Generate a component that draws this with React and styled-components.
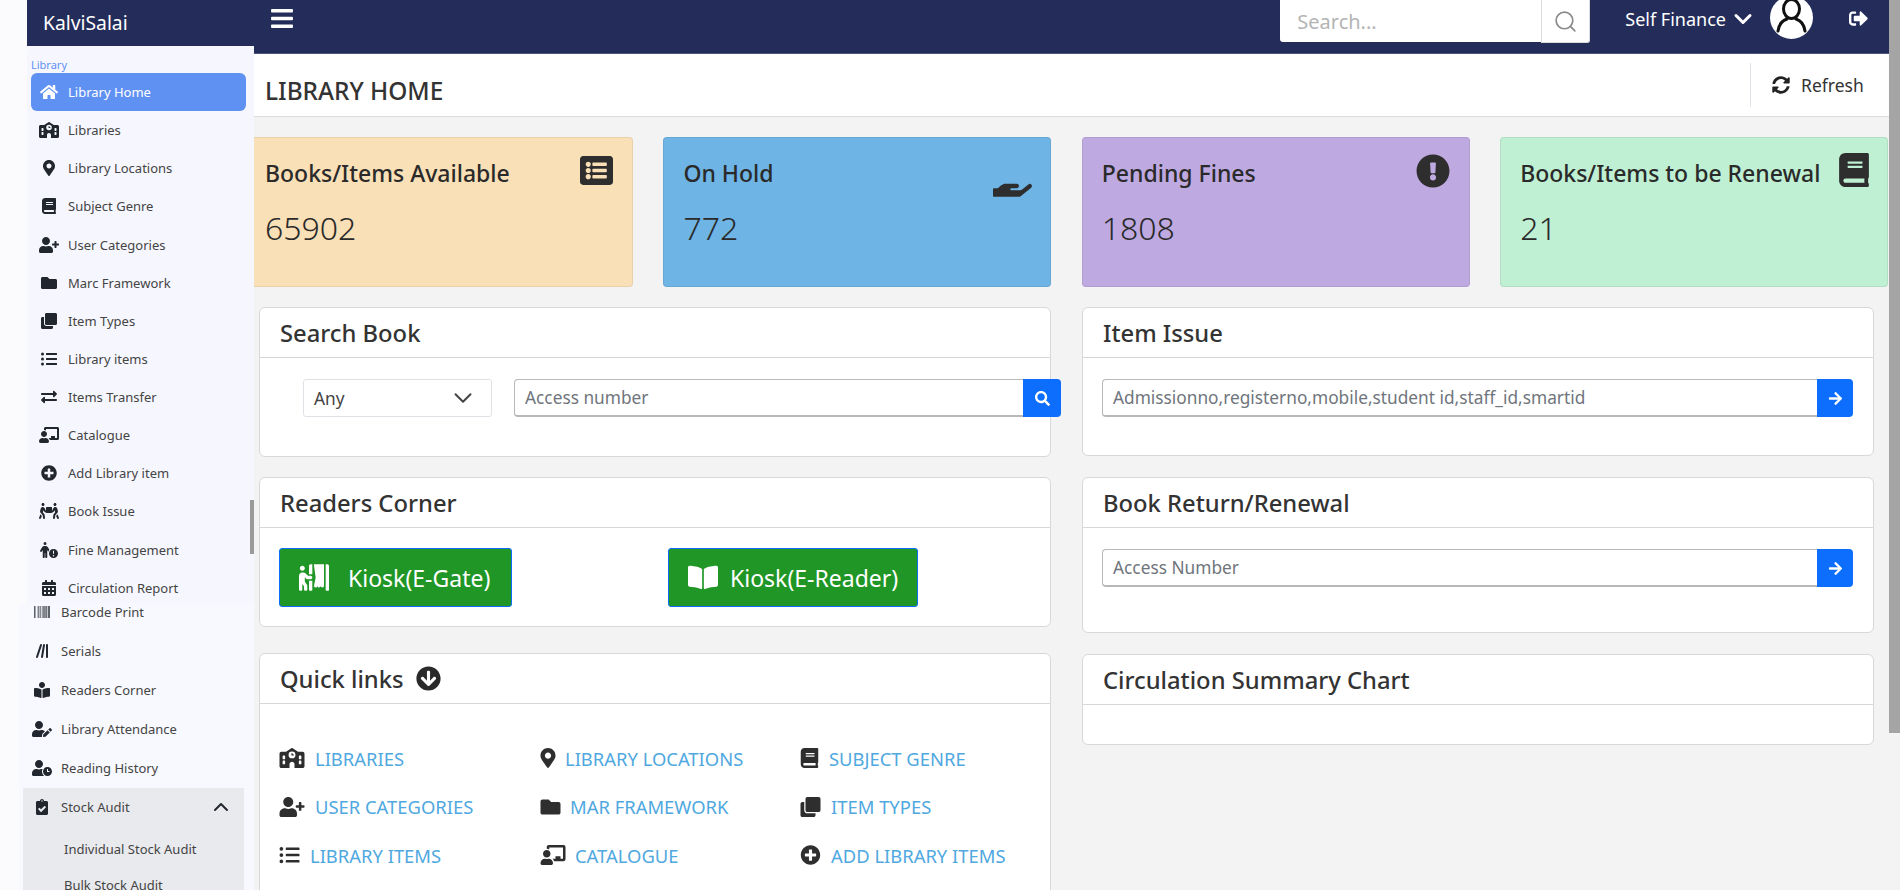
import styled, { createGlobalStyle } from 'styled-components'
import {
  FaHome, FaMapMarkerAlt, FaBook, FaUserPlus, FaFolder, FaClone, FaListUl, FaExchangeAlt,
  FaChalkboardTeacher, FaPlusCircle, FaPeopleCarry, FaCalendarAlt, FaBarcode, FaBookReader, FaUserEdit,
  FaUserClock, FaClipboardCheck, FaListAlt, FaHandHolding, FaExclamationCircle, FaSyncAlt,
  FaArrowCircleDown, FaPersonBooth, FaBookOpen, FaSearch, FaArrowRight, FaSignOutAlt, FaBars
} from 'react-icons/fa'
import { FaPersonCircleExclamation, FaLinesLeaning, FaSchool } from 'react-icons/fa6'
import { Search, ChevronDown, ChevronUp } from 'lucide-react'

const GlobalStyle = createGlobalStyle`
  * { box-sizing: border-box; }
  html, body { margin: 0; padding: 0; height: 890px; overflow: hidden; }
  body { font-family: 'Noto Sans', 'Open Sans', sans-serif; background: #f3f3f4; color: #333; }
  input { font-family: inherit; }
`

const Page = styled.div`
  display: flex;
  width: 1900px;
  height: 890px;
  overflow: hidden;
`

/* sidebar */

const Sidebar = styled.aside`
  position: relative;
  z-index: 2;
  flex: 0 0 254px;
  display: flex;
  flex-direction: column;
  background: #fbfbfd;
`

const Brand = styled.div`
  height: 46px;
  margin-left: 27px;
  padding-left: 16px;
  background: #242d5a;
  color: #fff;
  font-size: 19.3px;
  line-height: 46px;
`

const UpperMenu = styled.div`
  height: 557px;
  margin-left: 27px;
  padding: 11px 8px 0 4px;
  background: #f6f7fe;
  overflow: hidden;
`

const MenuLabel = styled.div`
  height: 16px;
  font-size: 11px;
  line-height: 15px;
  color: #5f91f3;
`

const UpperItem = styled.div`
  display: flex;
  align-items: center;
  height: 38.13px;
  padding-left: 8px;
  border-radius: 6px;
  font-size: 13px;
  color: ${p => (p.$active ? '#fff' : '#444')};
  background: ${p => (p.$active ? '#5f91f3' : 'transparent')};
  svg {
    flex: 0 0 20px;
    width: 20px;
    height: 16px;
    margin-right: 9px;
    color: ${p => (p.$active ? '#fff' : '#22262e')};
  }
`

const LowerMenu = styled.div`
  flex: 1;
  margin-left: 19px;
  padding: 0 10px 0 4px;
  background: #f8f9fe;
  overflow: hidden;
`

const LowerItem = styled.div`
  display: flex;
  align-items: center;
  height: 39px;
  padding-left: 9px;
  font-size: 13px;
  color: #444;
  margin-top: ${p => (p.$first ? '-11px' : '0')};
  svg {
    flex: 0 0 20px;
    width: 20px;
    height: 16px;
    margin-right: 9px;
    color: #22262e;
  }
`

const StockAudit = styled.div`
  background: #e9eaee;
  height: 110px;
  margin-top: 1px;
`

const StockHead = styled.div`
  display: flex;
  align-items: center;
  height: 38px;
  padding: 0 11px 0 9px;
  font-size: 13px;
  color: #444;
  svg.main {
    flex: 0 0 20px;
    width: 20px;
    height: 16px;
    margin-right: 9px;
    color: #22262e;
  }
  svg.chev {
    margin-left: auto;
    color: #22262e;
  }
`

const StockSub = styled.div`
  height: 36px;
  padding-left: 41px;
  font-size: 13px;
  line-height: 36px;
  color: #444;
  &:nth-of-type(2) { margin-top: 5px; }
`

const SideThumb = styled.div`
  position: absolute;
  top: 500px;
  right: 0;
  width: 4px;
  height: 54px;
  background: #9a9a9a;
`

/* main */

const Main = styled.main`
  flex: 1;
  min-width: 0;
  display: flex;
  flex-direction: column;
`

const TopBar = styled.header`
  flex: 0 0 54px;
  display: flex;
  align-items: flex-start;
  background: #242d5a;
  border-bottom: 1px solid #4a5482;
`

const Burger = styled.div`
  margin: 6px 0 0 14px;
  color: #fff;
  line-height: 0;
  svg { width: 28px; height: 25px; }
`

const TopRight = styled.div`
  display: flex;
  align-items: flex-start;
  margin-left: auto;
  margin-right: 20px;
`

const TopSearch = styled.div`
  display: flex;
`

const TopInput = styled.input`
  width: 261px;
  height: 42px;
  padding: 0 17px;
  border: 0;
  border-radius: 0 0 0 3px;
  outline: 0;
  background: #fff;
  font-size: 20px;
  &::placeholder { color: #b4b4b4; opacity: 1; }
`

const TopSearchBtn = styled.div`
  display: flex;
  align-items: center;
  justify-content: center;
  width: 49px;
  height: 43px;
  background: #fff;
  border: 1px solid #dcdcdc;
  border-top: 0;
  border-radius: 0 0 3px 0;
  color: #8a8a8a;
`

const Finance = styled.div`
  display: flex;
  align-items: center;
  height: 38px;
  margin-left: 35px;
  color: #fff;
  font-size: 18px;
  svg { margin-left: 3px; }
`

const Avatar = styled.div`
  width: 43px;
  height: 43px;
  margin: -4px 0 0 13px;
  border-radius: 50%;
  background: #fff;
  overflow: hidden;
  line-height: 0;
`

const Logout = styled.div`
  margin: 9px 0 0 35px;
  color: #fff;
  line-height: 0;
  svg { width: 21px; height: 19px; }
`

const TitleBar = styled.div`
  flex: 0 0 63px;
  display: flex;
  align-items: center;
  justify-content: space-between;
  padding: 0 0 0 11px;
  background: #fff;
  border-bottom: 1px solid #dcdcdc;
`

const Title = styled.h1`
  margin: 10px 0 0;
  font-size: 24.4px;
  font-weight: 500;
  color: #333;
`

const RefreshBtn = styled.div`
  display: flex;
  align-items: center;
  height: 44px;
  width: 139px;
  padding-left: 21px;
  border-left: 1px solid #dfe3e8;
  font-size: 17.5px;
  color: #333;
  svg { width: 18px; height: 18px; margin-right: 11px; color: #222; }
`

const Content = styled.div`
  flex: 1;
  padding: 20px 16px 0 5px;
  min-height: 0;
`

const CardRow = styled.div`
  display: grid;
  grid-template-columns: repeat(4, 388px);
  gap: 30.4px;
  margin: 0 0 20px -14px;
  width: 1644px;
`

const StatCard = styled.div`
  position: relative;
  height: 150px;
  padding: 14px 19px;
  border: 1px solid rgba(0, 0, 0, 0.07);
  border-radius: 4px;
  background: ${p => p.$bg};
  color: #2a2a2a;
`

const StatLabel = styled.div`
  font-size: 23px;
  font-weight: 500;
  line-height: 32px;
  margin-top: 5px;
`

const StatValue = styled.div`
  margin-top: 19px;
  font-size: 32px;
  font-weight: 300;
  line-height: 40px;
`

const StatIcon = styled.div`
  position: absolute;
  top: ${p => p.$top}px;
  right: ${p => p.$right}px;
  line-height: 0;
  color: #2e2e2e;
  svg { width: ${p => p.$size}px; height: ${p => p.$size}px; }
`

const Columns = styled.div`
  display: grid;
  grid-template-columns: 792px 792px;
  gap: 31px;
`

const Column = styled.div`
  display: flex;
  flex-direction: column;
  gap: ${p => p.$gap}px;
`

const Panel = styled.section`
  flex: 0 0 ${p => p.$height}px;
  height: ${p => p.$height}px;
  margin-top: ${p => p.$push || 0}px;
  background: #fff;
  border: 1px solid #d8d8d8;
  border-radius: 6px;
`

const PanelHead = styled.div`
  display: flex;
  align-items: center;
  height: 50px;
  padding-left: 20px;
  border-bottom: 1px solid #d8d8d8;
  font-size: 23.75px;
  font-weight: 500;
  color: #333;
  svg { width: 25px; height: 25px; margin-left: 12px; color: #2a2a2a; }
`

const SearchRow = styled.div`
  display: flex;
  margin: 21px 0 0 43px;
  width: 758px;
`

const Select = styled.div`
  display: flex;
  align-items: center;
  justify-content: space-between;
  width: 189px;
  height: 38px;
  margin-right: 22px;
  padding: 0 13px 0 10px;
  border: 1px solid #dee2e6;
  border-radius: 3px;
  font-size: 17.3px;
  color: #444;
`

const InputGroup = styled.div`
  display: flex;
  flex: 1;
  margin: ${p => p.$margin || '0'};
`

const TextInput = styled.input`
  flex: 1;
  min-width: 0;
  height: 38px;
  padding: 0 10px;
  border: 1px solid #b8b8b8;
  border-bottom-width: 2px;
  border-right: 0;
  border-radius: 4px 0 0 4px;
  outline: 0;
  font-size: 17.3px;
  &::placeholder { color: #6f757c; opacity: 1; }
`

const IconBtn = styled.div`
  display: flex;
  align-items: center;
  justify-content: center;
  flex: 0 0 ${p => p.$width}px;
  height: 38px;
  border-radius: 0 4px 4px 0;
  background: #0d6efd;
  color: #fff;
  svg { width: 15px; height: 15px; }
`

const KioskRow = styled.div`
  display: flex;
  gap: 156px;
  margin: 20px 0 0 19px;
`

const KioskBtn = styled.div`
  display: flex;
  align-items: center;
  width: ${p => p.$width}px;
  height: 59px;
  padding-left: 19px;
  border: 1px solid #0d6efd;
  border-radius: 3px;
  background: #1f9625;
  color: #fff;
  font-size: 23px;
  svg { width: 30px; height: 27px; margin-right: ${p => p.$gap}px; }
`

const LinkGrid = styled.div`
  display: grid;
  grid-template-columns: 261px 260px 1fr;
  grid-auto-rows: 48.5px;
  padding: 30px 0 0 19px;
`

const QuickLink = styled.div`
  display: flex;
  align-items: center;
  font-size: 18.4px;
  color: #4fa8e0;
  svg {
    width: ${p => p.$icon || 26}px;
    height: 20px;
    margin-right: ${p => p.$gap || 10}px;
    color: #2e2e2e;
  }
`

const PageBar = styled.div`
  flex: 0 0 11px;
  background: #f3f3f4;
`

const PageThumb = styled.div`
  height: 733px;
  background: #a5a5a5;
`

const upperItems = [
  ['Library Home', FaHome],
  ['Libraries', FaSchool],
  ['Library Locations', FaMapMarkerAlt],
  ['Subject Genre', FaBook],
  ['User Categories', FaUserPlus],
  ['Marc Framework', FaFolder],
  ['Item Types', FaClone],
  ['Library items', FaListUl],
  ['Items Transfer', FaExchangeAlt],
  ['Catalogue', FaChalkboardTeacher],
  ['Add Library item', FaPlusCircle],
  ['Book Issue', FaPeopleCarry],
  ['Fine Management', FaPersonCircleExclamation],
  ['Circulation Report', FaCalendarAlt],
]

const lowerItems = [
  ['Barcode Print', FaBarcode],
  ['Serials', FaLinesLeaning],
  ['Readers Corner', FaBookReader],
  ['Library Attendance', FaUserEdit],
  ['Reading History', FaUserClock],
]

const cards = [
  { label: 'Books/Items Available', value: '65902', bg: '#fae0b7', Icon: FaListAlt, top: 16, right: 19, size: 33 },
  { label: 'On Hold', value: '772', bg: '#6eb4e5', Icon: FaHandHolding, top: 22, right: 18, size: 39 },
  { label: 'Pending Fines', value: '1808', bg: '#bea9e1', Icon: FaExclamationCircle, top: 16, right: 19, size: 34 },
  { label: 'Books/Items to be Renewal', value: '21', bg: '#bff0d3', Icon: FaBook, top: 15, right: 16, size: 34 },
]

const quickLinks = [
  ['LIBRARIES', FaSchool, 26, 10],
  ['LIBRARY LOCATIONS', FaMapMarkerAlt, 16, 9],
  ['SUBJECT GENRE', FaBook, 19, 10],
  ['USER CATEGORIES', FaUserPlus, 26, 10],
  ['MAR FRAMEWORK', FaFolder, 21, 9],
  ['ITEM TYPES', FaClone, 21, 10],
  ['LIBRARY ITEMS', FaListUl, 21, 10],
  ['CATALOGUE', FaChalkboardTeacher, 26, 9],
  ['ADD LIBRARY ITEMS', FaPlusCircle, 21, 10],
]

// outline user in the header, no package icon has these proportions
const UserGlyph = () => (
  <svg viewBox="0 0 43 43" width="43" height="43" fill="none" stroke="#111" strokeWidth="3">
    <ellipse cx="21.5" cy="13" rx="8" ry="9.5" />
    <path d="M8 35c1-8 6-11 9-12M35 35c-1-8-6-11-9-12" strokeLinecap="round" />
  </svg>
)

export default function App() {
  return (
    <>
      <GlobalStyle />
      <Page>
        <Sidebar>
          <Brand>KalviSalai</Brand>
          <UpperMenu>
            <MenuLabel>Library</MenuLabel>
            {upperItems.map(([label, Icon], i) => (
              <UpperItem key={label} $active={i === 0}>
                <Icon />
                {label}
              </UpperItem>
            ))}
          </UpperMenu>
          <LowerMenu>
            {lowerItems.map(([label, Icon], i) => (
              <LowerItem key={label} $first={i === 0}>
                <Icon />
                {label}
              </LowerItem>
            ))}
            <StockAudit>
              <StockHead>
                <FaClipboardCheck className="main" />
                Stock Audit
                <ChevronUp className="chev" size={24} strokeWidth={2} />
              </StockHead>
              <StockSub>Individual Stock Audit</StockSub>
              <StockSub>Bulk Stock Audit</StockSub>
            </StockAudit>
          </LowerMenu>
          <SideThumb />
        </Sidebar>

        <Main>
          <TopBar>
            <Burger><FaBars /></Burger>
            <TopRight>
              <TopSearch>
                <TopInput placeholder="Search..." />
                <TopSearchBtn><Search size={25} strokeWidth={1.6} /></TopSearchBtn>
              </TopSearch>
              <Finance>
                Self Finance
                <ChevronDown size={28} strokeWidth={2.6} />
              </Finance>
              <Avatar><UserGlyph /></Avatar>
              <Logout><FaSignOutAlt /></Logout>
            </TopRight>
          </TopBar>

          <TitleBar>
            <Title>LIBRARY HOME</Title>
            <RefreshBtn><FaSyncAlt />Refresh</RefreshBtn>
          </TitleBar>

          <Content>
            <CardRow>
              {cards.map(({ label, value, bg, Icon, top, right, size }) => (
                <StatCard key={label} $bg={bg}>
                  <StatLabel>{label}</StatLabel>
                  <StatValue>{value}</StatValue>
                  <StatIcon $top={top} $right={right} $size={size}><Icon /></StatIcon>
                </StatCard>
              ))}
            </CardRow>

            <Columns>
              <Column $gap={20}>
                <Panel $height={150}>
                  <PanelHead>Search Book</PanelHead>
                  <SearchRow>
                    <Select>Any <ChevronDown size={30} strokeWidth={1.6} /></Select>
                    <InputGroup>
                      <TextInput placeholder="Access number" />
                      <IconBtn $width={38}><FaSearch /></IconBtn>
                    </InputGroup>
                  </SearchRow>
                </Panel>
                <Panel $height={150}>
                  <PanelHead>Readers Corner</PanelHead>
                  <KioskRow>
                    <KioskBtn $width={233} $gap={19}><FaPersonBooth />Kiosk(E-Gate)</KioskBtn>
                    <KioskBtn $width={250} $gap={12}><FaBookOpen />Kiosk(E-Reader)</KioskBtn>
                  </KioskRow>
                </Panel>
                <Panel $height={300} $push={6}>
                  <PanelHead>Quick links <FaArrowCircleDown /></PanelHead>
                  <LinkGrid>
                    {quickLinks.map(([label, Icon, icon, gap]) => (
                      <QuickLink key={label} $icon={icon} $gap={gap}>
                        <Icon />
                        {label}
                      </QuickLink>
                    ))}
                  </LinkGrid>
                </Panel>
              </Column>

              <Column $gap={21}>
                <Panel $height={149}>
                  <PanelHead>Item Issue</PanelHead>
                  <InputGroup $margin="21px 20px 0 19px">
                    <TextInput placeholder="Admissionno,registerno,mobile,student id,staff_id,smartid" />
                    <IconBtn $width={36}><FaArrowRight /></IconBtn>
                  </InputGroup>
                </Panel>
                <Panel $height={156}>
                  <PanelHead>Book Return/Renewal</PanelHead>
                  <InputGroup $margin="21px 20px 0 19px">
                    <TextInput placeholder="Access Number" />
                    <IconBtn $width={36}><FaArrowRight /></IconBtn>
                  </InputGroup>
                </Panel>
                <Panel $height={91}>
                  <PanelHead>Circulation Summary Chart</PanelHead>
                </Panel>
              </Column>
            </Columns>
          </Content>
        </Main>

        <PageBar><PageThumb /></PageBar>
      </Page>
    </>
  )
}
